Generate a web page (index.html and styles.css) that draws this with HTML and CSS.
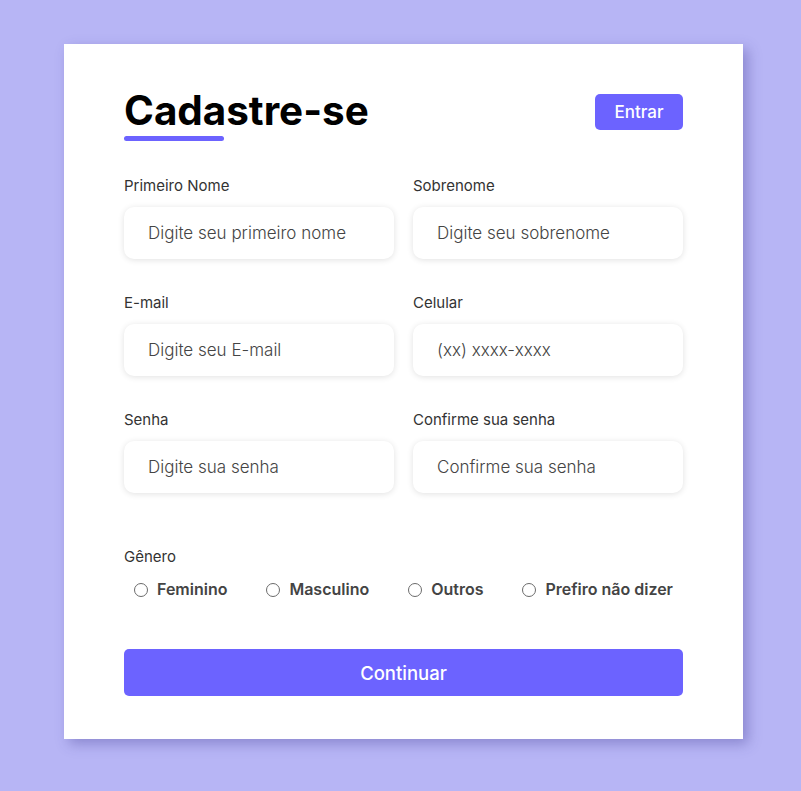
FILE: index.html
```html
<!DOCTYPE html>
<html lang="pt-BR">
<head>
<meta charset="utf-8">
<title>Cadastre-se</title>
<link rel="stylesheet" href="styles.css">
</head>
<body>
<div class="card">
  <div class="header">
    <div class="title-wrap">
      <h1 class="title">Cadastre-se</h1>
      <div class="underline"></div>
    </div>
    <button class="btn-login" type="button">Entrar</button>
  </div>
  <form class="form">
    <div class="grid">
      <div class="field">
        <label class="label" for="fn">Primeiro Nome</label>
        <input class="input" id="fn" type="text" placeholder="Digite seu primeiro nome">
      </div>
      <div class="field">
        <label class="label" for="ln">Sobrenome</label>
        <input class="input" id="ln" type="text" placeholder="Digite seu sobrenome">
      </div>
      <div class="field">
        <label class="label" for="em">E-mail</label>
        <input class="input" id="em" type="text" placeholder="Digite seu E-mail">
      </div>
      <div class="field">
        <label class="label" for="ph">Celular</label>
        <input class="input" id="ph" type="text" placeholder="(xx) xxxx-xxxx">
      </div>
      <div class="field">
        <label class="label" for="pw">Senha</label>
        <input class="input" id="pw" type="password" placeholder="Digite sua senha">
      </div>
      <div class="field">
        <label class="label" for="pc">Confirme sua senha</label>
        <input class="input" id="pc" type="password" placeholder="Confirme sua senha">
      </div>
    </div>
    <div class="gender">
      <div class="label">Gênero</div>
      <div class="radios">
        <label class="radio"><input type="radio" name="g"><span>Feminino</span></label>
        <label class="radio"><input type="radio" name="g"><span>Masculino</span></label>
        <label class="radio"><input type="radio" name="g"><span>Outros</span></label>
        <label class="radio"><input type="radio" name="g"><span>Prefiro não dizer</span></label>
      </div>
    </div>
    <button class="btn-continue" type="button">Continuar</button>
  </form>
</div>
</body>
</html>
```
FILE: styles.css
```css
* { box-sizing: border-box; }
html, body { margin: 0; padding: 0; }
body {
  background: #b7b5f5;
  font-family: Inter, "Noto Sans", sans-serif;
  width: 801px;
  height: 791px;
  overflow: hidden;
}
.card {
  margin: 44px 0 0 64px;
  width: 679px;
  height: 695px;
  background: #fff;
  padding: 43px 60px 0 60px;
  box-shadow: 5px 5px 12px rgba(60, 55, 140, 0.35);
}
.header {
  display: flex;
  justify-content: space-between;
  align-items: flex-start;
}
.title {
  margin: 0;
  font-size: 40.4px;
  line-height: 48px;
  font-weight: 700;
  color: #000;
}
.underline {
  margin-top: 1px;
  width: 100px;
  height: 5px;
  border-radius: 3px;
  background: #6c63ff;
}
.btn-login {
  margin-top: 7px;
  width: 88px;
  height: 36px;
  border: none;
  border-radius: 5px;
  background: #6c63ff;
  color: #fff;
  font-family: inherit;
  font-size: 17px;
  font-weight: 500;
}
.form { margin-top: 36px; }
.grid {
  display: grid;
  grid-template-columns: 270px 270px;
  column-gap: 19px;
  row-gap: 35px;
}
.field { display: flex; flex-direction: column; }
.label {
  font-size: 15px;
  line-height: 17px;
  color: #333;
  margin-bottom: 13px;
}
.input {
  height: 52px;
  border: none;
  border-radius: 10px;
  background: #fff;
  padding: 0 24px;
  font-family: inherit;
  font-size: 17px;
  font-weight: 300;
  color: #333;
  box-shadow: 0 1px 6px rgba(0, 0, 0, 0.12);
  outline: none;
}
.input::placeholder { color: #444; }
.gender { margin-top: 55px; }
.gender .label { margin-bottom: 14px; }
.radios {
  display: flex;
  justify-content: space-between;
  padding: 0 10px 0 5px;
}
.radio {
  display: flex;
  align-items: center;
  font-size: 16px;
  font-weight: 600;
  color: #444;
  line-height: 20px;
}
.radio input {
  appearance: none;
  -webkit-appearance: none;
  margin: 1px 2px 0 5px;
  width: 14px;
  height: 14px;
  border: 1px solid #6b6b6b;
  border-radius: 50%;
  background: #fff;
}
.radio span { margin-left: 7px; }
.btn-continue {
  margin-top: 50px;
  width: 100%;
  height: 47px;
  border: none;
  border-radius: 5px;
  background: #6c63ff;
  color: #fff;
  font-family: inherit;
  font-size: 18.5px;
  font-weight: 500;
}
```
